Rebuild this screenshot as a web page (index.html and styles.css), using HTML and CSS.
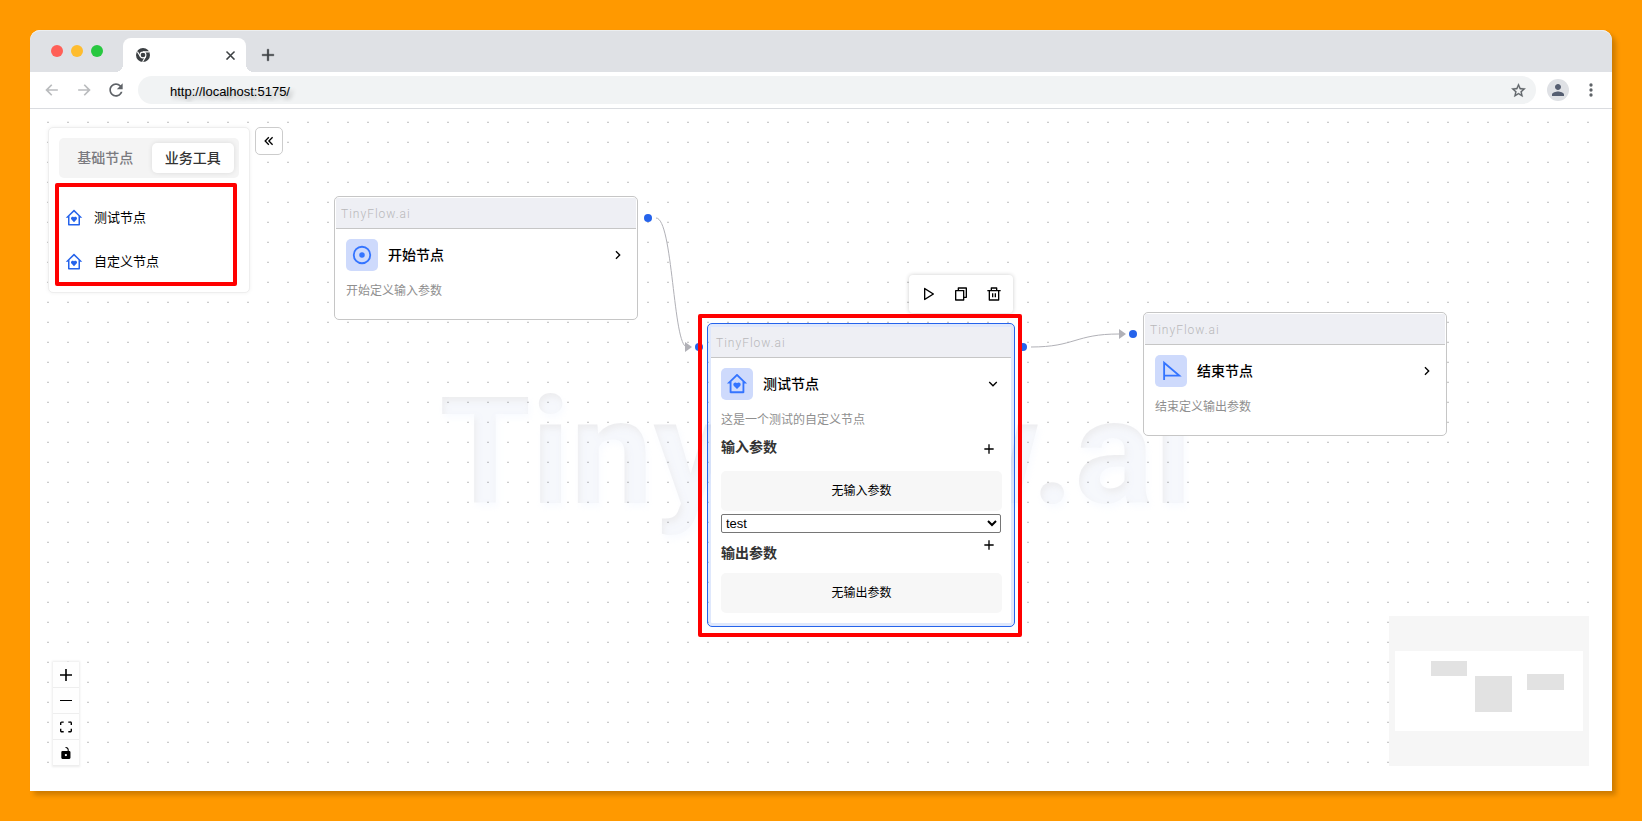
FILE: index.html
```html
<!DOCTYPE html>
<html lang="zh-CN">
<head>
<meta charset="utf-8">
<meta name="viewport" content="width=device-width, initial-scale=1">
<title>TinyFlow.ai</title>
<link rel="stylesheet" href="styles.css">
</head>
<body>
<svg class="sprite" aria-hidden="true">
  <symbol id="i-home" viewBox="0 0 24 24"><path d="M20 21C20 21.5523 19.5523 22 19 22H5C4.44772 22 4 21.5523 4 21V11.500L1 11.500L11.3273 1.3C11.7087 1 12.2913 1 12.6727 1.3L23 11.500L20 11.500V21ZM18 20V9.300L12 3.500L6 9.300V20H18ZM12 17.500L8.64124 14.1412C7.76256 13.2626 7.76256 11.8379 8.64124 10.9593C9.51992 10.08058 10.9445 10.08058 11.8232 10.9593L12 11.136L12.1768 10.9593C13.0555 10.08058 14.4801 10.08058 15.3588 10.9593C16.2374 11.8379 16.2374 13.2626 15.3588 14.1412L12 17.500Z"/></symbol>
  <symbol id="i-right" viewBox="0 0 24 24"><path d="M13.1717 12.0007L8.22192 7.05093L9.63614 5.63672L16.0001 12.0007L9.63614 18.3646L8.22192 16.9504L13.1717 12.0007Z"/></symbol>
  <symbol id="i-down" viewBox="0 0 24 24"><path d="M12 13.1714L16.9497 8.22168L18.3639 9.63589L12 15.9999L5.63604 9.63589L7.05025 8.22168L12 13.1714Z"/></symbol>
  <symbol id="i-add" viewBox="0 0 24 24"><path d="M11 11V5H13V11H19V13H13V19H11V13H5V11H11Z"/></symbol>
</svg>
<div class="window">
  <header class="tabstrip">
    <div class="lights"><span class="light red"></span><span class="light yellow"></span><span class="light green"></span></div>
    <div class="browser-tab">
      <svg class="chrome" viewBox="0 0 14 14" width="14" height="14"><circle cx="7" cy="7" r="7" fill="#3c4043"/><circle cx="7" cy="7" r="2.900" fill="none" stroke="#fff" stroke-width="1.100"/><path d="M7 3.900H13.200M4.400 8.500L1.400 3.600M9.700 8.500L6.600 13.800" stroke="#fff" stroke-width="1.100"/></svg>
      <button class="icon-btn" aria-label="Close tab"><svg viewBox="0 0 24 24" width="15" height="15"><path d="M19 6.410L17.590 5 12 10.590 6.410 5 5 6.410 10.590 12 5 17.590 6.410 19 12 13.410 17.590 19 19 17.590 13.410 12z" stroke="#3c4043" stroke-width=".5"/></svg></button>
    </div>
    <button class="icon-btn new-tab" aria-label="New tab"><svg viewBox="0 0 24 24" width="20" height="20"><path d="M19 13h-6v6h-2v-6H5v-2h6V5h2v6h6v2z" stroke="#3c4043" stroke-width=".4"/></svg></button>
  </header>
  <div class="toolbar">
    <button class="icon-btn faded" aria-label="Back"><svg viewBox="0 0 24 24" width="20" height="20"><path d="M19 11H7.830l4.590-4.590L11 5l-7 7 7 7 1.410-1.410L7.830 13H19v-2z"/></svg></button>
    <button class="icon-btn faded" aria-label="Forward"><svg viewBox="0 0 24 24" width="20" height="20"><path d="M5 11h11.170l-4.590-4.590L13 5l7 7-7 7-1.410-1.410L16.170 13H5v-2z"/></svg></button>
    <button class="icon-btn grey" aria-label="Reload"><svg viewBox="0 0 24 24" width="20" height="20"><path d="M17.650 6.350C16.200 4.900 14.210 4 12 4c-4.420 0-7.990 3.580-7.990 8s3.570 8 7.990 8c3.730 0 6.840-2.550 7.730-6h-2.080c-.82 2.330-3.040 4-5.650 4-3.310 0-6-2.690-6-6s2.690-6 6-6c1.660 0 3.140.69 4.220 1.780L13 11h7V4l-2.350 2.350z"/></svg></button>
    <div class="address">
      <input class="url" type="text" aria-label="Address" value="http://localhost:5175/">
      <button class="icon-btn grey" aria-label="Bookmark"><svg viewBox="0 0 24 24" width="17" height="17"><path d="M22 9.240l-7.190-.62L12 2 9.190 8.630 2 9.240l5.460 4.730L5.820 21 12 17.270 18.180 21l-1.630-7.030L22 9.240zM12 15.400l-3.760 2.270 1-4.280-3.320-2.880 4.380-.38L12 6.100l1.710 4.040 4.380.38-3.320 2.880 1 4.280L12 15.400z" stroke="#5f6368" stroke-width=".4"/></svg></button>
    </div>
    <button class="icon-btn avatar" aria-label="Profile"><svg viewBox="0 0 24 24" width="18" height="18"><path d="M12 12c2.210 0 4-1.790 4-4s-1.790-4-4-4-4 1.790-4 4 1.790 4 4 4zm0 2c-2.670 0-8 1.340-8 4v2h16v-2c0-2.660-5.330-4-8-4z"/></svg></button>
    <button class="icon-btn grey" aria-label="Menu"><svg viewBox="0 0 24 24" width="20" height="20"><circle cx="12" cy="6" r="2"/><circle cx="12" cy="12" r="2"/><circle cx="12" cy="18" r="2"/></svg></button>
  </div>

  <main class="canvas">
    <div class="watermark" aria-hidden="true">TinyFlow.ai</div>
    <svg class="dots" width="100%" height="100%">
      <defs><pattern id="dot" x="17" y="12" width="20" height="20" patternUnits="userSpaceOnUse"><rect width="2" height="1" fill="#000" opacity=".06"/><rect y="1" width="2" height="1" fill="#000" opacity=".2"/></pattern></defs>
      <rect width="100%" height="100%" fill="url(#dot)"/>
    </svg>
    <svg class="edges" width="100%" height="100%">
      <g fill="none" stroke="#b1b1b7"><path d="M626 109C643 109 643 238 657 238"/><path d="M1001 238C1045 238 1045 225 1089 225"/></g>
      <g fill="#b1b1b7"><path d="M655 233L662 238L655 243Z"/><path d="M1089 220L1096 225L1089 230Z"/></g>
    </svg>

    <section class="node node-start">
      <div class="brand">TinyFlow.ai</div>
      <div class="node-body">
        <div class="node-head">
          <span class="badge"><svg viewBox="0 0 24 24" width="22" height="22"><circle cx="12" cy="12" r="9" fill="none" stroke="currentColor" stroke-width="2"/><circle cx="12" cy="12" r="3"/></svg></span>
          <h2 class="title">开始节点</h2>
          <button class="icon-btn" aria-label="展开"><svg width="16" height="16"><use href="#i-right"/></svg></button>
        </div>
        <p class="desc">开始定义输入参数</p>
      </div>
      <span class="handle out"></span>
    </section>

    <section class="node node-test">
      <div class="brand">TinyFlow.ai</div>
      <div class="node-body">
        <div class="node-head">
          <span class="badge"><svg width="22" height="22"><use href="#i-home"/></svg></span>
          <h2 class="title">测试节点</h2>
          <button class="icon-btn" aria-label="收起"><svg width="16" height="16"><use href="#i-down"/></svg></button>
        </div>
        <p class="desc">这是一个测试的自定义节点</p>
        <div class="param-head inputs"><h3 class="param-title">输入参数</h3><button class="icon-btn add" aria-label="添加输入参数"><svg width="16" height="16"><use href="#i-add"/></svg></button></div>
        <div class="empty">无输入参数</div>
        <select class="choice" aria-label="测试选项"><option>test</option></select>
        <div class="param-head outputs"><h3 class="param-title">输出参数</h3><button class="icon-btn add" aria-label="添加输出参数"><svg width="16" height="16"><use href="#i-add"/></svg></button></div>
        <div class="empty">无输出参数</div>
      </div>
      <span class="handle in"></span><span class="handle out"></span>
      <div class="node-tools">
        <button class="icon-btn" aria-label="运行"><svg viewBox="0 0 24 24" width="16" height="16"><path d="M8 18.3915V5.60846L18.2264 12L8 18.3915ZM6 3.80421V20.1957C6 20.9812 6.86395 21.46 7.53 21.0437L20.6432 12.848C21.2699 12.4563 21.2699 11.5436 20.6432 11.152L7.53 2.95621C6.86395 2.53993 6 3.01878 6 3.80421Z"/></svg></button>
        <button class="icon-btn" aria-label="复制"><svg viewBox="0 0 24 24" width="16" height="16"><path d="M7 6V3C7 2.44772 7.44752 2 8 2H20C20.5521 2 21 2.44772 21 3V17C21 17.5523 20.5521 18 20 18H17V21C17 21.5519 16.5499 22 15.993 22H4.00666C3.45059 22 3 21.5554 3 21L3.0026 7.00087C3.0027 6.44811 3.45264 6 4.00942 6H7ZM5.00242 8L5 20H15V8H5.00242ZM9 6H17V16H19V4H9V6Z"/></svg></button>
        <button class="icon-btn" aria-label="删除"><svg viewBox="0 0 24 24" width="16" height="16"><path d="M17 6H22V8H20V21C20 21.5523 19.5523 22 19 22H5C4.44772 22 4 21.5523 4 21V8H2V6H7V3C7 2.44772 7.44772 2 8 2H16C16.5523 2 17 2.44772 17 3V6ZM18 8H6V20H18V8ZM9 11H11V17H9V11ZM13 11H15V17H13V11ZM9 4V6H15V4H9Z"/></svg></button>
      </div>
      <span class="mark"></span>
    </section>

    <section class="node node-end">
      <div class="brand">TinyFlow.ai</div>
      <div class="node-body">
        <div class="node-head">
          <span class="badge"><svg viewBox="0 0 24 24" width="22" height="22"><path d="M4.500 21.800V3L21 17H4.500" fill="none" stroke="currentColor" stroke-width="2"/></svg></span>
          <h2 class="title">结束节点</h2>
          <button class="icon-btn" aria-label="展开"><svg width="16" height="16"><use href="#i-right"/></svg></button>
        </div>
        <p class="desc">结束定义输出参数</p>
      </div>
      <span class="handle in"></span>
    </section>

    <aside class="palette">
      <div class="palette-panel">
        <div class="switch">
          <button class="switch-item">基础节点</button>
          <button class="switch-item active">业务工具</button>
        </div>
        <div class="tools">
          <button class="tool"><svg width="18" height="18"><use href="#i-home"/></svg>测试节点</button>
          <button class="tool"><svg width="18" height="18"><use href="#i-home"/></svg>自定义节点</button>
          <span class="mark"></span>
        </div>
      </div>
      <button class="collapse" aria-label="收起面板"><svg viewBox="0 0 24 24" width="16" height="16"><path d="M4.83582 12L11.0429 18.2071L12.4571 16.7929L7.66424 12L12.4571 7.20712L11.0429 5.79291L4.83582 12ZM10.4857 12L16.6928 18.2071L18.107 16.7929L13.3141 12L18.107 7.20712L16.6928 5.79291L10.4857 12Z"/></svg></button>
    </aside>

    <div class="controls">
      <button class="control" aria-label="放大"><svg viewBox="0 0 32 32" width="12" height="12"><path d="M32 18.133H18.133V32h-4.266V18.133H0v-4.266h13.867V0h4.266v13.867H32z"/></svg></button>
      <button class="control" aria-label="缩小"><svg viewBox="0 0 12 1" width="12" height="1"><path d="M0 0h12v1H0z"/></svg></button>
      <button class="control" aria-label="适应画布"><svg viewBox="0 0 32 30" width="12" height="12"><path d="M3.692 4.630c0-.53.4-.938.939-.938h5.215V0H4.708C2.130 0 0 2.054 0 4.630v5.216h3.692V4.631zM27.354 0h-5.200v3.692h5.170c.53 0 .984.4.984.939v5.215H32V4.631A4.624 4.624 0 0027.354 0zm.954 24.830c0 .532-.4.940-.939.940h-5.215v3.768h5.215c2.577 0 4.631-2.130 4.631-4.707v-5.139h-3.692v5.139zm-23.677.940c-.531 0-.939-.4-.939-.940v-5.138H0v5.139c0 2.577 2.130 4.707 4.708 4.707h5.138V25.770H4.631z"/></svg></button>
      <button class="control" aria-label="锁定"><svg viewBox="0 0 25 32" width="12" height="12"><path d="M21.333 10.667H19.810V7.619C19.810 3.429 16.380 0 12.190 0c-4.114 1.828-1.370 2.133.305 2.438 1.676.305 4.420 2.590 4.420 5.181v3.048H3.047A3.056 3.056 0 000 13.714v15.238A3.056 3.056 0 003.048 32h18.285a3.056 3.056 0 003.048-3.048V13.714a3.056 3.056 0 00-3.048-3.047zM12.190 24.533a3.056 3.056 0 01-3.047-3.047 3.056 3.056 0 013.047-3.048 3.056 3.056 0 013.048 3.048 3.056 3.056 0 01-3.048 3.047z"/></svg></button>
    </div>

    <svg class="minimap" viewBox="0 0 200 150" width="200" height="150">
      <rect width="200" height="150" fill="#f6f6f6"/><rect x="6" y="35" width="188" height="80" fill="#fff"/>
      <g fill="#e2e2e2"><rect x="42" y="45" width="36" height="15"/><rect x="86" y="60" width="37" height="36"/><rect x="138" y="58" width="37" height="16"/></g>
    </svg>
  </main>
</div>
</body>
</html>
```
FILE: styles.css
```css
* { box-sizing: border-box; }

body {
  margin: 0;
  min-height: 100vh;
  display: flex;
  padding: 30px;
  background: #ff9900;
  color: #000;
  font-family: Roboto, "Noto Sans CJK SC", sans-serif;
  font-size: 14px;
  line-height: 20px;
}

h2, h3, p { margin: 0; }
svg { display: block; fill: currentColor; }
.sprite { position: absolute; width: 0; height: 0; }

button {
  margin: 0;
  padding: 0;
  border: 0;
  background: none;
  color: inherit;
  font: inherit;
}

.icon-btn { display: flex; align-items: center; justify-content: center; }

.window {
  flex: 1;
  min-width: 0;
  display: flex;
  flex-direction: column;
  background: #fff;
  border-radius: 10px 10px 0 0;
  box-shadow: 4px 4px 5px rgba(0, 0, 0, .2);
}

/* Browser frame */
.tabstrip {
  display: flex;
  height: 42px;
  padding: 7px 0 0 21px;
  border-radius: 10px 10px 0 0;
  border-top: 1px solid #eceef0;
  background: #dfe1e5;
  color: #3c4043;
}
.lights { display: flex; gap: 8px; padding-top: 7px; width: 72px; }
.light { width: 12px; height: 12px; border-radius: 50%; }
.light.red { background: #ff5f57; }
.light.yellow { background: #febc2e; }
.light.green { background: #28c840; }

.browser-tab {
  position: relative;
  display: flex;
  align-items: center;
  justify-content: space-between;
  width: 123px;
  padding: 0 8px 0 13px;
  border-radius: 8px 8px 0 0;
  background: #fff;
}
.browser-tab::before,
.browser-tab::after {
  content: "";
  position: absolute;
  bottom: 0;
  width: 8px;
  height: 8px;
}
.browser-tab::before { right: 100%; background: radial-gradient(circle at 0 0, transparent 8px, #fff 8px); }
.browser-tab::after { left: 100%; background: radial-gradient(circle at 100% 0, transparent 8px, #fff 8px); }
.new-tab { padding-left: 12px; }

.toolbar {
  display: flex;
  align-items: center;
  gap: 12px;
  height: 37px;
  padding: 0 11px 0 12px;
  border-bottom: 1px solid #dadce0;
}
.faded { color: #babcbe; }
.grey { color: #5f6368; }
.address {
  flex: 1;
  display: flex;
  align-items: center;
  height: 28px;
  padding: 0 9px 0 32px;
  border-radius: 14px;
  background: #f1f3f4;
}
.url {
  flex: 1;
  min-width: 0;
  padding: 4px 0 0;
  border: 0;
  outline: 0;
  background: none;
  color: #000;
  font: 13px/20px "Liberation Sans", Arial, sans-serif;
  text-shadow: 3px 3px 4px rgba(0, 0, 0, .3);
}
.avatar { width: 22px; height: 22px; margin-left: -1px; border-radius: 50%; background: #dfe1e5; color: #555e71; }

/* Flow canvas */
.canvas {
  position: relative;
  flex: 1;
  min-height: 640px;
  display: grid;
  place-items: center;
  overflow: hidden;
}
.watermark {
  padding: 6px 10px 0 0;
  font-size: 148px;
  line-height: 170px;
  font-weight: 700;
  color: transparent;
  background: #ededef;
  -webkit-background-clip: text;
  background-clip: text;
  text-shadow: 2px 4px 6px rgba(248, 250, 255, .8);
}
.dots, .edges { position: absolute; left: 0; top: 0; }
.dots { width: calc(100% - 20px); height: calc(100% - 20px); }

.node {
  position: absolute;
  width: 304px;
  padding: 1px;
  border: 1px solid #c6c6c6;
  border-radius: 5px;
  background: #fff;
}
.node-start { left: 304px; top: 87px; }
.node-end { left: 1113px; top: 203px; }
.node-test {
  left: 677px;
  top: 214px;
  width: 308px;
  padding: 3px;
  border-color: #2563eb;
  background: linear-gradient(#fff, #fff) content-box, rgba(37, 99, 235, .15);
}
.brand {
  height: 31px;
  padding: 0 5px;
  border-bottom: 1px solid #c6c6c6;
  background: #eeeff4;
  color: #b8b8ba;
  font-size: 12px;
  line-height: 32px;
  font-weight: 300;
  letter-spacing: 1px;
}
.node-body { display: flex; flex-direction: column; padding: 10px 9px 10px 10px; }
.node-start .node-body, .node-end .node-body { min-height: 89px; }
.node-head { display: flex; align-items: center; gap: 10px; padding-right: 1px; }
.badge {
  display: flex;
  align-items: center;
  justify-content: center;
  width: 32px;
  height: 32px;
  border-radius: 5px;
  background: #cedafc;
  color: #3474ff;
}
.title { flex: 1; font-size: 14px; line-height: 20px; font-weight: 500; }
.desc { margin-top: 10px; color: #8f8f8f; font-size: 12px; line-height: 20px; }

.param-head { display: flex; justify-content: space-between; color: #333; }
.param-title { font-size: 14px; line-height: 20px; font-weight: 700; }
.add { width: 26px; height: 16px; color: #000; }
.inputs { align-items: flex-end; margin: 7px 0 14px; }
.outputs { align-items: flex-start; margin: 4px 0 10px; }
.outputs .param-title { margin-top: 6px; }
.empty {
  padding: 10px;
  border-radius: 5px;
  background: #f7f7f7;
  font-size: 12px;
  line-height: 20px;
  text-align: center;
}
.choice {
  height: 19px;
  margin: 3px 1px 0 0;
  padding: 0;
  border: 1px solid #767676;
  border-radius: 2px;
  background: #fff;
  color: #000;
  font: 13px/17px "Liberation Sans", Arial, sans-serif;
}

.handle { position: absolute; width: 8px; height: 8px; border-radius: 50%; background: #2563eb; }
.node-start .out { right: -15px; top: 17px; }
.node-end .in { left: -15px; top: 17px; }
.node-test .in { left: -13px; top: 19px; }
.node-test .out { right: -13px; top: 19px; }

.node-tools {
  position: absolute;
  right: 1px;
  bottom: calc(100% + 11px);
  display: flex;
  gap: 17px;
  padding: 11px;
  border-radius: 4px;
  background: #fff;
  box-shadow: 0 0 4px rgba(0, 0, 0, .2);
}

.mark { position: absolute; border: 4px solid #f00; border-radius: 2px; pointer-events: none; }
.node-test .mark { inset: -10px -8px -11px -10px; }
.tools .mark { inset: -13px 2px -2px -4px; }

/* Floating panels */
.palette { position: absolute; left: 18px; top: 18px; display: flex; align-items: flex-start; gap: 5px; }
.palette-panel {
  width: 202px;
  padding: 10px 10px 8px;
  border: 1px solid #eee;
  border-radius: 5px;
  background: #fff;
  box-shadow: 0 0 4px rgba(0, 0, 0, .06);
}
.switch { display: flex; gap: 5px; padding: 5px; border-radius: 5px; background: #f4f4f4; }
.switch-item { flex: 1; height: 30px; padding: 0; border-radius: 5px; color: #7b7b80; font-weight: 500; }
.switch-item.active { background: #fff; color: #333; box-shadow: 0 0 5px rgba(0, 0, 0, .1); }
.tools { position: relative; margin-top: 18px; }
.tool {
  display: flex;
  align-items: center;
  gap: 11px;
  width: 100%;
  height: 44px;
  padding-left: 6px;
  font-size: 13px;
}
.tool svg { color: #2563eb; }
.collapse {
  display: flex;
  align-items: center;
  justify-content: center;
  width: 28px;
  height: 28px;
  border: 1px solid #ccc;
  border-radius: 5px;
  background: #fff;
}

.controls {
  position: absolute;
  left: 23px;
  bottom: 25px;
  display: flex;
  flex-direction: column;
  box-shadow: 0 0 2px 1px rgba(0, 0, 0, .08);
}
.control {
  display: flex;
  align-items: center;
  justify-content: center;
  width: 26px;
  height: 26px;
  border-bottom: 1px solid #eee;
  background: #fefefe;
}
.minimap { position: absolute; right: 23px; bottom: 25px; }
```
